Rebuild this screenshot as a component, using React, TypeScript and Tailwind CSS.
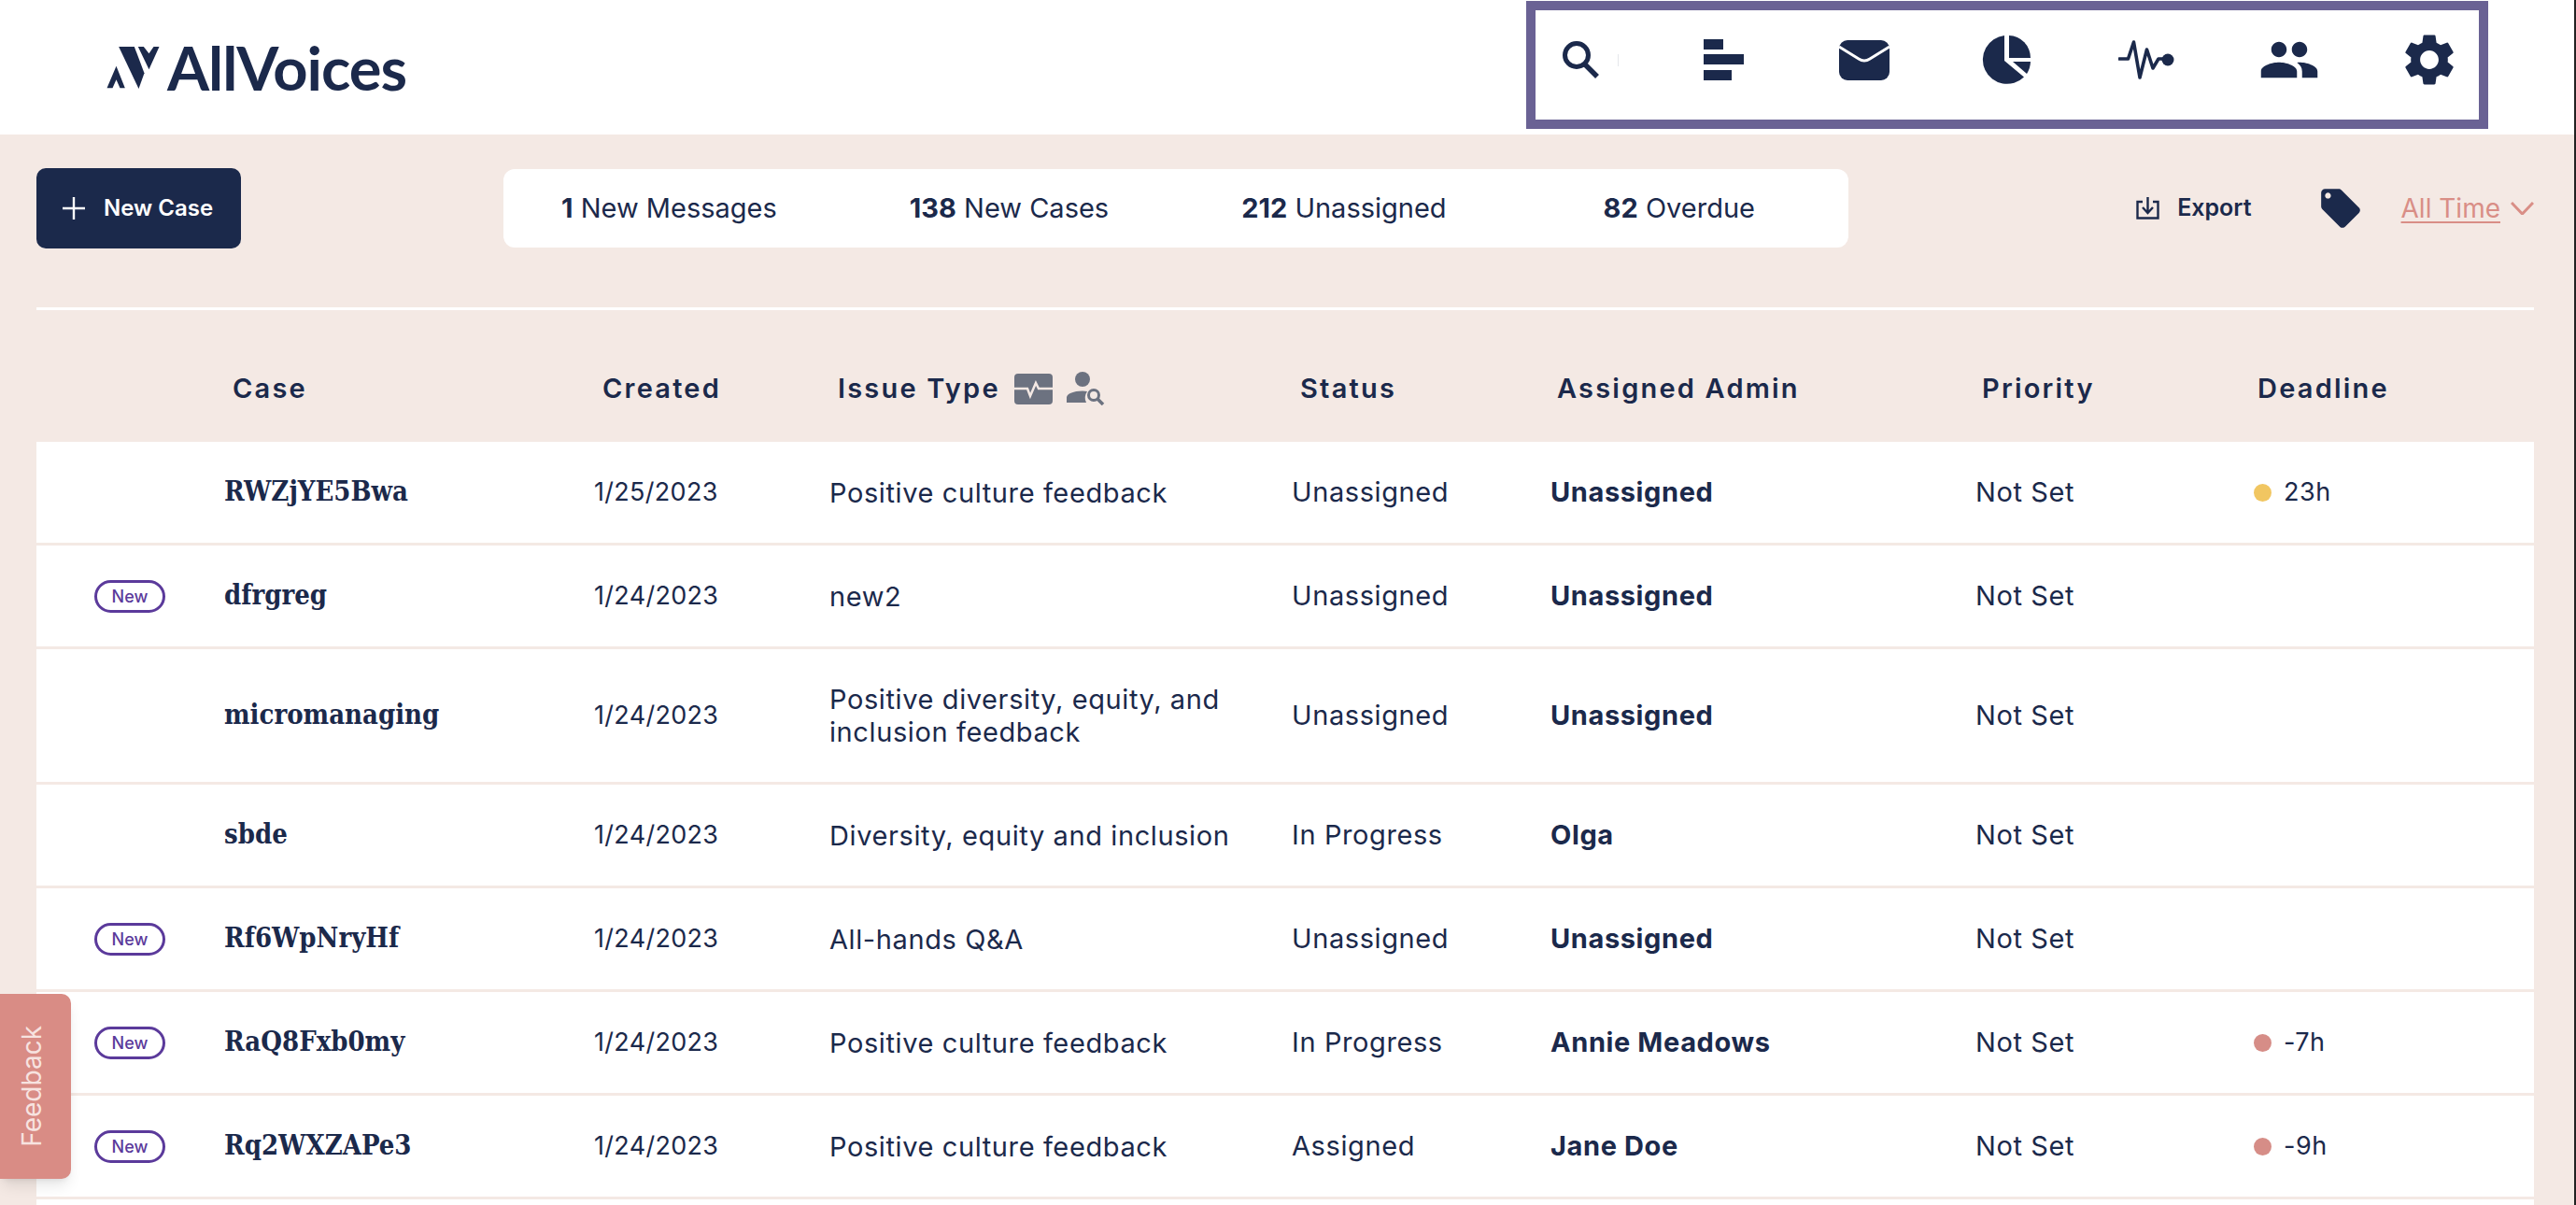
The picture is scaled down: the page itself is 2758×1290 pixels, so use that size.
import { FC, ReactNode } from 'react';
import { MdLocalOffer, MdPeople, MdSettings } from 'react-icons/md';

const sans = "font-['Inter','Liberation_Sans',sans-serif]";

interface Row {
  isNew?: boolean;
  name: string;
  created: string;
  issue: string;
  status: string;
  admin: string;
  deadline?: { label: string; tone: 'warn' | 'late' };
  tall?: boolean;
}

const rows: Row[] = [
  { name: 'RWZjYE5Bwa', created: '1/25/2023', issue: 'Positive culture feedback', status: 'Unassigned', admin: 'Unassigned', deadline: { label: '23h', tone: 'warn' } },
  { isNew: true, name: 'dfrgreg', created: '1/24/2023', issue: 'new2', status: 'Unassigned', admin: 'Unassigned' },
  { name: 'micromanaging', created: '1/24/2023', issue: 'Positive diversity, equity, and\ninclusion feedback', status: 'Unassigned', admin: 'Unassigned', tall: true },
  { name: 'sbde', created: '1/24/2023', issue: 'Diversity, equity and inclusion', status: 'In Progress', admin: 'Olga' },
  { isNew: true, name: 'Rf6WpNryHf', created: '1/24/2023', issue: 'All-hands Q&A', status: 'Unassigned', admin: 'Unassigned' },
  { isNew: true, name: 'RaQ8Fxb0my', created: '1/24/2023', issue: 'Positive culture feedback', status: 'In Progress', admin: 'Annie Meadows', deadline: { label: '-7h', tone: 'late' } },
  { isNew: true, name: 'Rq2WXZAPe3', created: '1/24/2023', issue: 'Positive culture feedback', status: 'Assigned', admin: 'Jane Doe', deadline: { label: '-9h', tone: 'late' } },
];

// logo mark, traced from the reference
const LogoMark = () => (
  <svg viewBox="0 0 168 135" className="w-[57px] h-[45px] fill-[#1b294b]">
    <path d="M0 133 30 62 58 133H42L30 106 18 133Z" />
    <path d="M38 0H88L120 85 102 135Z" />
    <path d="M100 0H118L135 22 150 0H168L135 73Z" />
  </svg>
);

const SearchIcon = () => (
  <svg viewBox="0 0 39 40" className="w-[39px] h-[40px] fill-none stroke-[#1b294b]">
    <circle cx="15" cy="15" r="12.5" strokeWidth="5" />
    <path d="M24 25 37 38" strokeWidth="5.5" />
  </svg>
);

const BarsIcon = () => (
  <svg viewBox="0 0 43 44" className="w-[43px] h-[44px] fill-[#1b294b]">
    <rect x="0" y="0" width="21" height="11" />
    <rect x="0" y="16" width="43" height="11" />
    <rect x="0" y="33" width="30" height="11" />
  </svg>
);

const MailIcon = () => (
  <svg viewBox="0 0 54 43" className="w-[54px] h-[43px]">
    <rect x="0" y="0" width="54" height="43" rx="9" className="fill-[#1b294b]" />
    <path d="M0 7 21 20Q27 24 33 20L54 7" className="fill-none stroke-white" strokeWidth="3" />
  </svg>
);

const PieIcon = () => (
  <svg viewBox="0 0 52 52" className="w-[52px] h-[52px] fill-[#1b294b]">
    <path d="M24 0A26 26 0 1 0 45 44.5L24 27Z" />
    <path d="M29 0A24 24 0 0 1 52 24H29Z" />
    <path d="M33 28H52A26 26 0 0 1 48 41Z" />
  </svg>
);

const PulseIcon = () => (
  <svg viewBox="0 0 60 42" className="w-[60px] h-[42px]">
    <path
      d="M1 20H10.5L16.5 2 23 40 30.5 10 37 30 43 20H53"
      className="fill-none stroke-[#1b294b]"
      strokeWidth="3.6"
      strokeLinecap="round"
      strokeLinejoin="round"
    />
    <circle cx="53" cy="21" r="6.5" className="fill-[#1b294b]" />
  </svg>
);

const ExportIcon = () => (
  <svg viewBox="0 0 25 24" className="w-[25px] h-[24px] fill-none stroke-[#1b294b]" strokeWidth="2.4">
    <path d="M7 5H1.5V22.5H23.5V5H18" />
    <path d="M12.5 0V16M7 11 12.5 17 18 11" />
  </svg>
);

const ActivityCard = () => (
  <svg viewBox="0 0 41 33" className="w-[41px] h-[33px]">
    <rect width="41" height="33" rx="4" className="fill-[#6c7280]" />
    <path d="M0 16H14L17 24 23 10 26 16H41" className="fill-none stroke-[#f4e9e4]" strokeWidth="2.5" />
  </svg>
);

const PersonSearch = () => (
  <svg viewBox="0 0 42 36" className="w-[42px] h-[36px]">
    <circle cx="17" cy="8" r="8" className="fill-[#6c7280]" />
    <path d="M0 33V27Q2 21 17 20.5Q20 20.5 22 21Q18 27 21 33Z" className="fill-[#6c7280]" />
    <circle cx="29" cy="25" r="5.5" className="fill-none stroke-[#6c7280]" strokeWidth="3" />
    <path d="M33 29 39 35" className="stroke-[#6c7280]" strokeWidth="3.5" />
  </svg>
);

const Stat: FC<{ num: string; label: string; className: string }> = ({ num, label, className }) => (
  <div className={`text-[29px] text-[#1b294b] whitespace-nowrap ${className}`}>
    <span className="font-bold">{num}</span> {label}
  </div>
);

const HeadCell: FC<{ children: ReactNode; className?: string }> = ({ children, className = '' }) => (
  <div className={`text-[29px] font-semibold tracking-[2.2px] text-[#1b294b] ${className}`}>{children}</div>
);

const CaseRow: FC<{ row: Row }> = ({ row }) => (
  <div className={`grid grid-cols-[201px_396px_252px_495px_277px_455px_298px_1fr] items-center bg-white text-[29px] tracking-[0.6px] text-[#1b294b] mb-[3px] ${row.tall ? 'h-[142px]' : 'h-[108px]'}`}>
    <div className="pl-[62px]">
      {row.isNew && (
        <span className="flex items-center justify-center w-[76px] h-[35px] rounded-full border-[3px] border-[#5b3a9b] text-[18px] tracking-normal font-medium text-[#5b3a9b]">
          New
        </span>
      )}
    </div>
    <div className="font-['DejaVu_Serif_Condensed','Liberation_Serif',serif] font-bold text-[29px] tracking-normal">{row.name}</div>
    <div className="text-[27px] tracking-[0.3px]">{row.created}</div>
    <div className="whitespace-pre-line leading-[35px]">{row.issue}</div>
    <div>{row.status}</div>
    <div className="font-bold">{row.admin}</div>
    <div>Not Set</div>
    <div className="flex items-center gap-[13px] text-[27px] tracking-[0.5px]">
      {row.deadline && (
        <>
          <span className={`w-[19px] h-[19px] rounded-full ${row.deadline.tone === 'warn' ? 'bg-[#f1c661]' : 'bg-[#d68d87]'}`} />
          {row.deadline.label}
        </>
      )}
    </div>
  </div>
);

const App: FC = () => {
  return (
    <div className={`relative h-screen overflow-hidden bg-[#f4e9e4] border-r-2 border-[#222222] ${sans}`}>
      <header className="flex items-start justify-between h-[144px] bg-white pr-[92px]">
        <div className="flex items-center gap-[8px] ml-[114px] mt-[50px] h-[45px]">
          <LogoMark />
          <span className="font-['Lato','Inter',sans-serif] font-bold text-[65px] leading-[45px] text-[#1b294b] tracking-[-1px]">AllVoices</span>
        </div>
        <nav className="flex items-center w-[1030px] h-[137px] mt-px border-[10px] border-[#6a6294] pb-[11px] text-[#1b294b]">
          <div className="ml-[29px]"><SearchIcon /></div>
          <div className="w-px h-[13px] ml-[20px] bg-gray-200" />
          <div className="ml-[91px]"><BarsIcon /></div>
          <div className="ml-[102px]"><MailIcon /></div>
          <div className="ml-[99px]"><PieIcon /></div>
          <div className="ml-[94px]"><PulseIcon /></div>
          <div className="ml-[90px]"><MdPeople className="w-[66px] h-[66px]" /></div>
          <div className="ml-[84px]"><MdSettings className="w-[66px] h-[66px]" /></div>
        </nav>
      </header>

      <main className="pl-[39px] pr-[43px]">
        <div className="flex items-center pt-[36px]">
          <button className="flex items-center gap-[20px] w-[219px] h-[86px] pl-[28px] rounded-[10px] bg-[#1b294b] text-white text-[24px] font-semibold whitespace-nowrap">
            <svg viewBox="0 0 24 24" className="w-[24px] h-[24px] stroke-white" strokeWidth="2.4">
              <path d="M12 0V24M0 12H24" />
            </svg>
            New Case
          </button>
          <div className="flex items-center w-[1440px] h-[84px] ml-[281px] rounded-[12px] bg-white">
            <Stat num="1" label="New Messages" className="ml-[62px]" />
            <Stat num="138" label="New Cases" className="ml-[142px]" />
            <Stat num="212" label="Unassigned" className="ml-[142px]" />
            <Stat num="82" label="Overdue" className="ml-[168px]" />
          </div>
          <div className="flex items-center ml-auto text-[#1b294b]">
            <ExportIcon />
            <span className="ml-[19px] text-[25px] font-semibold">Export</span>
            <MdLocalOffer className="w-[50px] h-[50px] ml-[70px]" />
            <span className="ml-[40px] text-[28px] text-[#d98e86] underline underline-offset-4">All Time</span>
            <svg viewBox="0 0 25 14" className="w-[25px] h-[14px] ml-[11px] fill-none stroke-[#d98e86]" strokeWidth="3">
              <path d="M1 1 12.5 13 24 1" />
            </svg>
          </div>
        </div>

        <div className="h-[3px] mt-[63px] bg-white" />

        <div className="grid grid-cols-[210px_396px_252px_495px_275px_455px_295px_1fr] items-center h-[141px] pt-[27px]">
          <div />
          <HeadCell>Case</HeadCell>
          <HeadCell>Created</HeadCell>
          <div className="flex items-center">
            <HeadCell>Issue Type</HeadCell>
            <div className="ml-[15px]"><ActivityCard /></div>
            <div className="ml-[15px]"><PersonSearch /></div>
          </div>
          <HeadCell>Status</HeadCell>
          <HeadCell>Assigned Admin</HeadCell>
          <HeadCell>Priority</HeadCell>
          <HeadCell>Deadline</HeadCell>
        </div>

        {rows.map((row) => (
          <CaseRow key={row.name} row={row} />
        ))}
        <div className="h-[108px] bg-white" />
      </main>

      <button className="absolute left-0 top-[1064px] flex items-center justify-center w-[76px] h-[198px] pr-[8px] rounded-r-[10px] bg-[#d98c85] shadow-lg">
        <span className="[writing-mode:vertical-rl] rotate-180 text-[28px] text-[#f7e3e0]">Feedback</span>
      </button>
    </div>
  );
};

export default App;
